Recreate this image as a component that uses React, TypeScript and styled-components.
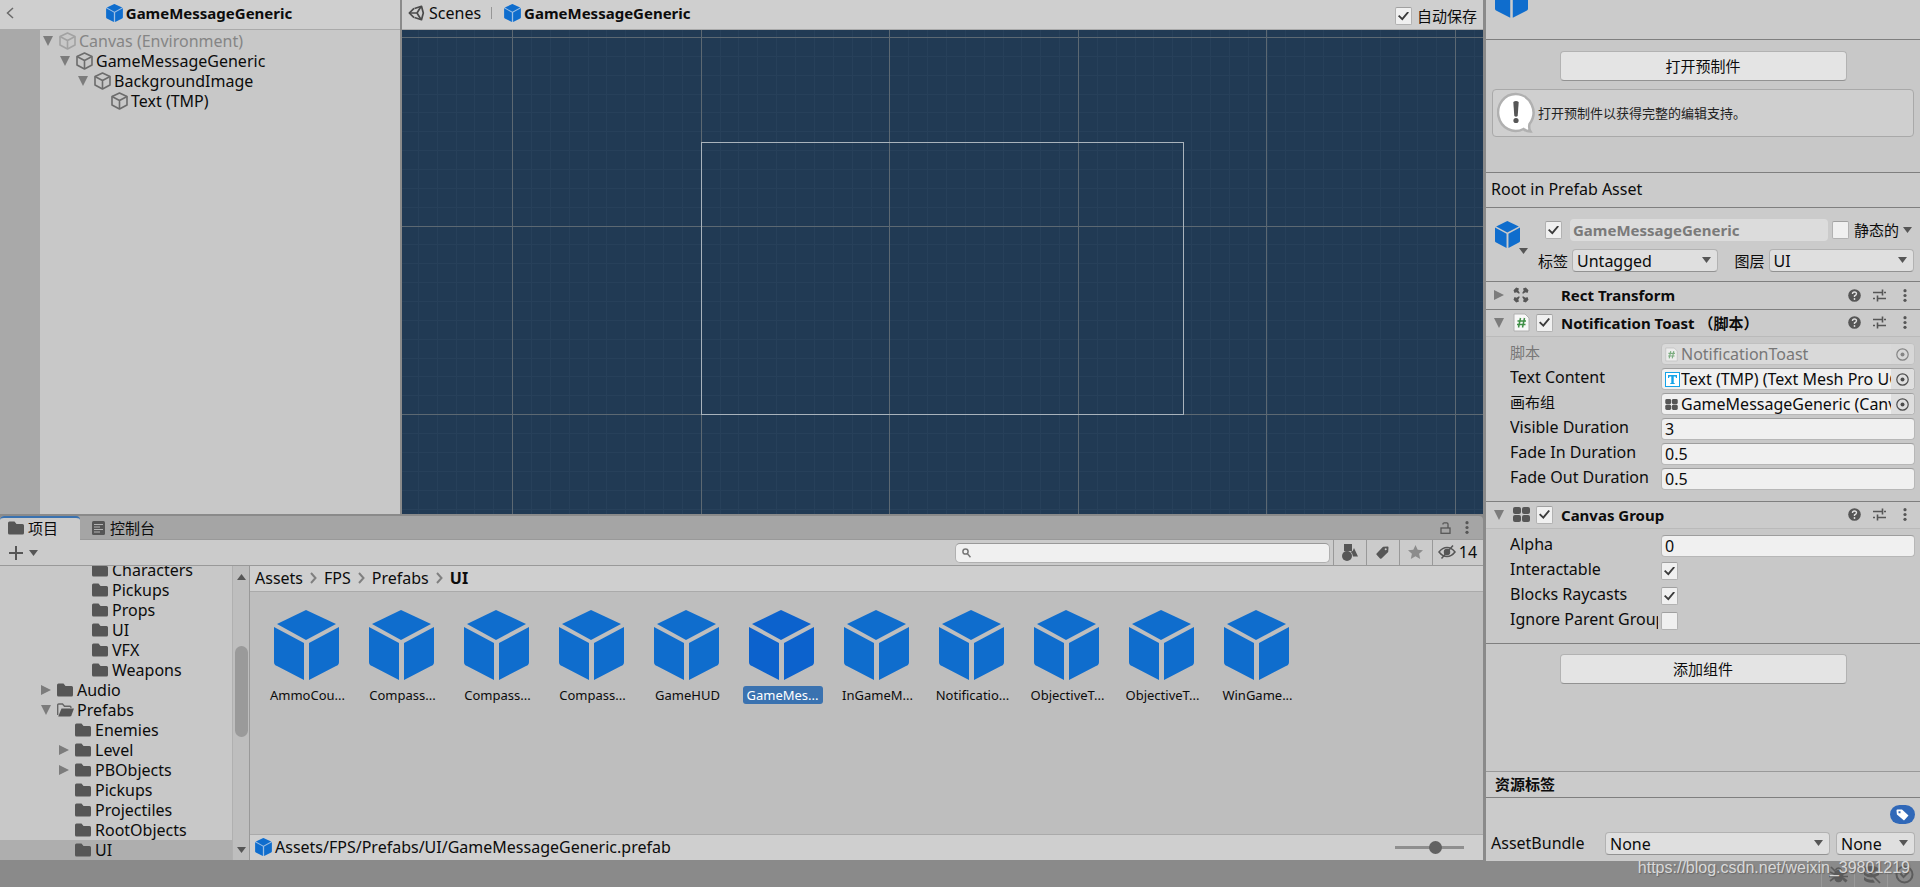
import React from 'react';
import styled, { createGlobalStyle, css } from 'styled-components';

const GlobalStyle = createGlobalStyle`
  *, *::before, *::after { box-sizing: border-box; }
  body {
    margin: 0;
    background: #8a8a8a;
    color: #0c0c0c;
    font: 16px/20px "Noto Sans", "Noto Sans CJK SC", sans-serif;
  }
  button, input, select { font: inherit; color: inherit; }
  button { background: none; border: 0; padding: 0; cursor: pointer; }
  ul { list-style: none; margin: 0; padding: 0; }
  h2, h3 { margin: 0; font-size: 15px; line-height: 20px; }
  :lang(zh) { font-size: 15px; }
  svg { display: block; flex: none; }
`;

/* ---------- Layout ---------- */

const Page = styled.div`
  display: flex;
  flex-direction: column;
  min-height: 100vh;
`;
const Workspace = styled.div`
  flex: 1;
  display: flex;
  gap: 3px;
`;
const MainColumn = styled.div`
  flex: 1;
  min-width: 0;
  display: flex;
  flex-direction: column;
  gap: 2px;
  padding-bottom: 1px;
`;
const TopPanels = styled.div`
  flex: 1;
  display: flex;
  gap: 2px;
`;
const Panel = styled.section`
  display: flex;
  flex-direction: column;
  background: #c8c8c8;
  min-width: 0;
`;
const HierarchyPanel = styled(Panel)`
  width: 400px;
`;
const ScenePanel = styled(Panel)`
  flex: 1;
`;
const PanelBar = styled.header`
  display: flex;
  align-items: center;
  height: 30px;
  background: #cfcfcf;
  border-bottom: 1px solid #aaa;
  padding: 0 6px 3px;
`;
const Title = styled.h2`
  display: flex;
  align-items: center;
  gap: 3px;
  font-weight: 700;
`;
const CenterTitle = styled(Title)`
  flex: 1;
  justify-content: center;
  padding-right: 10px;
`;

/* ---------- Hierarchy ---------- */

const HierarchyBody = styled.div`
  flex: 1;
  display: flex;
`;
const Gutter = styled.div`
  width: 40px;
  background: #a9a9a9;
`;
const Tree = styled.ul`
  flex: 1;
  padding-top: 1px;
`;
const TreeRow = styled.li<{ $indent: number; $dim?: boolean; $selected?: boolean }>`
  display: flex;
  align-items: center;
  height: 20px;
  white-space: nowrap;
  padding-left: ${p => p.$indent}px;
  color: ${p => (p.$dim ? '#858585' : 'inherit')};
  background: ${p => (p.$selected ? '#aeaeae' : 'transparent')};
`;
const Toggle = styled.button`
  width: 10px;
  height: 20px;
  margin-right: 6px;
  display: flex;
  align-items: center;
`;
const TreeIcon = styled.span`
  width: 20px;
`;

/* ---------- Scene ---------- */

const Crumb = styled.a`
  display: flex;
  align-items: center;
  gap: 4px;
  color: inherit;
  text-decoration: none;
`;
const BarDivider = styled.span`
  width: 1px;
  height: 12px;
  margin: 0 12px 0 10px;
  background: #969696;
`;
const AutoSave = styled.label`
  display: flex;
  align-items: center;
  gap: 5px;
  margin-left: auto;
  padding-top: 6px;
`;
const SceneCanvas = styled.svg`
  flex: 1;
  width: 100%;
  min-height: 200px;
  background: #213a54;
`;

/* ---------- Form controls ---------- */

const Check = styled.input.attrs({ type: 'checkbox' })`
  appearance: none;
  flex: none;
  display: grid;
  place-items: center;
  width: 17px;
  height: 18px;
  margin: 0;
  background: #f0f0f0;
  border: 1px solid #b2b2b2;
  border-top-color: #a0a0a0;
  border-radius: 2px;
  &:checked::before {
    content: '';
    width: 11px;
    height: 9px;
    background: #3c3c3c;
    clip-path: polygon(0 52%, 12% 38%, 38% 70%, 86% 0, 100% 10%, 40% 100%);
  }
`;
const fieldBox = css`
  height: 22px;
  background: #f0f0f0;
  border: 1px solid #b7b7b7;
  border-top-color: #9e9e9e;
  border-radius: 4px;
`;
const TextField = styled.input.attrs({ type: 'text' })`
  ${fieldBox}
  min-width: 0;
  width: 100%;
  padding: 0 3px;
`;
const ObjectBox = styled.div<{ $dim?: boolean }>`
  ${fieldBox}
  display: flex;
  align-items: center;
  min-width: 0;
  overflow: hidden;
  padding-left: 3px;
  ${p => p.$dim && css`background: #d9d9d9; border-color: #c0c0c0; color: #777;`}
`;
const ObjectName = styled.input.attrs({ type: 'text', readOnly: true })`
  flex: 1;
  min-width: 0;
  height: 20px;
  border: 0;
  padding: 0;
  background: transparent;
  text-overflow: clip;
`;
const ObjectIcon = styled.span`
  width: 16px;
  flex: none;
`;
const Picker = styled.button<{ $dim?: boolean }>`
  width: 23px;
  height: 20px;
  display: grid;
  place-items: center;
  background: ${p => (p.$dim ? '#d6d6d6' : '#dedede')};
  opacity: ${p => (p.$dim ? 0.6 : 1)};
`;
const SelectWrap = styled.span<{ $width?: number }>`
  position: relative;
  display: block;
  ${p => (p.$width ? css`width: ${p.$width}px;` : css`flex: 1;`)}
  & > svg { position: absolute; right: 7px; top: 8px; pointer-events: none; }
`;
const SelectBox = styled.select`
  appearance: none;
  display: block;
  width: 100%;
  height: 23px;
  padding: 0 18px 0 4px;
  background: #dfdfdf;
  border: 1px solid #b2b2b2;
  border-bottom-color: #929292;
  border-radius: 4px;
`;
const WideButton = styled.button`
  display: block;
  width: 287px;
  height: 30px;
  margin: 0 auto;
  padding-bottom: 1px;
  background: #e4e4e4;
  border: 1px solid #b2b2b2;
  border-bottom-color: #929292;
  border-radius: 4px;
`;

/* ---------- Project ---------- */

const ProjectPanel = styled(Panel)`
  height: 344px;
  background: #a5a5a5;
  border-radius: 4px 4px 0 0;
  overflow: hidden;
`;
const TabBar = styled.div`
  display: flex;
  height: 24px;
  border-bottom: 1px solid #999;
`;
const Tab = styled.button<{ $active?: boolean }>`
  display: flex;
  align-items: center;
  gap: 5px;
  height: 24px;
  padding: 0 8px;
  ${p => p.$active && css`
    gap: 4px;
    width: 80px;
    margin-right: 4px;
    background: #cbcbcb;
    border-top: 2px solid #3a72b0;
    border-radius: 4px 4px 0 0;
    padding-bottom: 2px;
  `}
`;
const TabActions = styled.div`
  display: flex;
  align-items: center;
  gap: 14px;
  margin-left: auto;
  padding-right: 14px;
`;
const ToolBar = styled.div`
  display: flex;
  align-items: center;
  height: 26px;
  background: #cbcbcb;
  border-bottom: 1px solid #999;
`;
const AddButton = styled.button`
  display: flex;
  align-items: center;
  gap: 5px;
  padding-left: 8px;
`;
const Search = styled.label`
  display: flex;
  align-items: center;
  gap: 4px;
  width: 375px;
  height: 20px;
  margin: 0 3px 0 auto;
  padding: 0 6px;
  background: #f0f0f0;
  border: 1px solid #b0b0b0;
  border-top-color: #999;
  border-radius: 5px;
`;
const SearchInput = styled.input.attrs({ type: 'search' })`
  flex: 1;
  min-width: 0;
  border: 0;
  padding: 0;
  height: 16px;
  background: transparent;
  outline: 0;
`;
const ToolButton = styled.button<{ $wide?: boolean }>`
  display: flex;
  align-items: center;
  justify-content: center;
  gap: 3px;
  width: ${p => (p.$wide ? 51 : 33)}px;
  height: 25px;
  padding: 0 1px 1px 0;
  border-left: 1px solid #999;
`;
const ProjectBody = styled.div`
  flex: 1;
  min-height: 0;
  display: flex;
`;
const FolderPane = styled.div`
  width: 232px;
  background: #c8c8c8;
  display: flex;
  flex-direction: column;
  justify-content: flex-end;
  overflow: hidden;
`;
const ScrollTrack = styled.div`
  display: flex;
  flex-direction: column;
  align-items: center;
  width: 18px;
  padding: 8px 0 7px;
  background: #bebebe;
  border-left: 1px solid #b0b0b0;
  border-right: 1px solid #999;
`;
const ScrollRail = styled.div`
  flex: 1;
  width: 13px;
  padding-top: 66px;
`;
const ScrollThumb = styled.div`
  height: 91px;
  border-radius: 7px;
  background: #9a9a9a;
`;
const AssetPane = styled.div`
  flex: 1;
  min-width: 0;
  display: flex;
  flex-direction: column;
  background: #bebebe;
`;
const Breadcrumbs = styled.nav`
  display: flex;
  align-items: center;
  gap: 7px;
  height: 26px;
  padding: 0 5px 2px;
  background: #cfcfcf;
  border-bottom: 1px solid #aaa;
`;
const AssetGrid = styled.ul`
  flex: 1;
  display: flex;
  flex-wrap: wrap;
  align-content: flex-start;
  padding: 18px 9px 0;
`;
const Asset = styled.li`
  width: 95px;
  display: flex;
  flex-direction: column;
  align-items: center;
  gap: 6px;
`;
const AssetName = styled.span<{ $selected?: boolean }>`
  width: 80px;
  height: 18px;
  margin-left: 2px;
  font-size: 13px;
  line-height: 18px;
  text-align: center;
  white-space: nowrap;
  border-radius: 3px;
  background: ${p => (p.$selected ? '#3a72b0' : 'transparent')};
  color: ${p => (p.$selected ? '#fff' : 'inherit')};
`;
const PathBar = styled.footer`
  display: flex;
  align-items: center;
  gap: 3px;
  height: 26px;
  padding: 0 19px 1px 5px;
  background: #cfcfcf;
  border-top: 1px solid #aaa;
`;
const Zoom = styled.input.attrs({ type: 'range' })`
  appearance: none;
  width: 69px;
  height: 13px;
  margin: 0 0 0 auto;
  background: linear-gradient(#8f8f8f, #8f8f8f) center / 100% 3px no-repeat;
  &::-webkit-slider-thumb {
    appearance: none;
    width: 13px;
    height: 13px;
    border-radius: 50%;
    background: #626262;
  }
`;

/* ---------- Inspector ---------- */

const Inspector = styled.aside`
  width: 434px;
  display: flex;
  flex-direction: column;
  background: #c8c8c8;
`;
const AssetHeader = styled.div`
  height: 40px;
  padding-left: 9px;
  overflow: hidden;
  background: #cbcbcb;
  border-bottom: 1px solid #7f7f7f;
  & > svg { margin-top: -18px; }
`;
const OpenArea = styled.div`
  display: flex;
  flex-direction: column;
  gap: 8px;
  height: 133px;
  padding: 11px 6px 0;
  border-bottom: 1px solid #7f7f7f;
`;
const HelpBox = styled.div`
  display: flex;
  align-items: center;
  gap: 2px;
  height: 48px;
  padding-left: 4px;
  color: #222;
  background: #cfcfcf;
  border: 1px solid #a9a9a9;
  border-radius: 4px;
  & > p { margin: 0; font-size: 13px; }
`;
const RootNote = styled.div`
  height: 35px;
  padding: 6px 5px;
  background: #cbcbcb;
  border-bottom: 1px solid #7f7f7f;
`;
const ObjectHeader = styled.div`
  display: flex;
  height: 74px;
  padding: 11px 6px 0 9px;
  background: #cbcbcb;
  border-bottom: 1px solid #7f7f7f;
`;
const ObjectPreview = styled.button`
  display: flex;
  flex-direction: column;
  align-items: flex-end;
  width: 33px;
  height: 32px;
  padding-top: 2px;
  & > svg:first-child { align-self: flex-start; }
`;
const HeaderLines = styled.div`
  flex: 1;
  min-width: 0;
  display: flex;
  flex-direction: column;
  gap: 8px;
`;
const NameLine = styled.div`
  display: flex;
  align-items: center;
  height: 22px;
  gap: 4px;
  padding: 0 2px 0 17px;
`;
const NameInput = styled.input.attrs({ type: 'text' })`
  flex: 1;
  min-width: 0;
  height: 22px;
  margin-left: 4px;
  padding: 0 3px;
  font-size: 15px;
  font-weight: 700;
  color: #7a7a7a;
  background: #dcdcdc;
  border: 0;
  border-radius: 4px;
`;
const StaticLabel = styled.label`
  padding-left: 1px;
`;
const TagLine = styled.div`
  display: flex;
  align-items: center;
  gap: 4px;
  padding-left: 10px;
  & > label:nth-of-type(2) { margin-left: 13px; }
`;
const ComponentBar = styled.header<{ $open?: boolean }>`
  display: flex;
  align-items: center;
  height: ${p => (p.$open ? 27 : 28)}px;
  padding: 0 3px 1px 8px;
  background: #cbcbcb;
  border-bottom: 1px solid ${p => (p.$open ? '#bababa' : '#7f7f7f')};
`;
const BarSlot = styled.span<{ $width: number }>`
  width: ${p => p.$width}px;
  display: flex;
  align-items: center;
`;
const ComponentName = styled.h3`
  flex: 1;
`;
const BarActions = styled.div`
  display: flex;
  & > button {
    width: 25px;
    display: grid;
    place-items: center;
  }
`;
const Fields = styled.div`
  display: flex;
  flex-direction: column;
  gap: 3px;
  padding: 6px 5px 11px 24px;
  border-bottom: 1px solid #7f7f7f;
`;
const FieldRow = styled.div<{ $dim?: boolean }>`
  display: grid;
  grid-template-columns: 148px 1fr;
  column-gap: 3px;
  height: 22px;
  & > label {
    overflow-x: clip;
    overflow-y: visible;
    white-space: nowrap;
    line-height: 18px;
    color: ${p => (p.$dim ? '#777' : 'inherit')};
  }
  & > input[type='checkbox'] { align-self: center; }
`;
const AddArea = styled.div`
  flex: 1;
  padding-top: 10px;
`;
const LabelsBar = styled.header`
  height: 27px;
  padding: 2px 9px;
  background: #cbcbcb;
  border-top: 1px solid #999;
  border-bottom: 1px solid #7f7f7f;
`;
const LabelsBody = styled.div`
  display: flex;
  flex-direction: column;
  gap: 8px;
  height: 63px;
  padding: 7px 5px 0;
  background: #cbcbcb;
`;
const TagPill = styled.button`
  display: grid;
  place-items: center;
  align-self: flex-end;
  width: 25px;
  height: 19px;
  border-radius: 10px;
  background: #3068b8;
`;
const BundleLine = styled.div`
  display: flex;
  align-items: center;
  gap: 6px;
  & > label { width: 108px; padding-bottom: 2px; }
`;

/* ---------- Status bar ---------- */

const StatusBar = styled.footer`
  position: relative;
  display: flex;
  justify-content: flex-end;
  height: 26px;
  background: #8a8a8a;
`;
const StatusButton = styled.button`
  display: grid;
  place-items: center;
  width: 33px;
  border-left: 1px solid #9a9a9a;
  color: #5c5c5c;
`;
const Watermark = styled.span`
  position: absolute;
  right: 10px;
  top: -3px;
  font: 16px/20px "Liberation Sans", Arial, sans-serif;
  color: rgba(235, 235, 235, 0.85);
  text-shadow: 1px 1px 1px rgba(80, 80, 80, 0.6);
`;

/* ---------- Icons ---------- */

const Cube = ({ w, h, fill = '#0f6dcd', back }: { w: number; h: number; fill?: string; back?: boolean }) => (
  <svg width={w} height={h} viewBox="0 0 65 70">
    {back && <path d="M32 0 65 15V54L32 70 0 54V15Z" fill="#9dbfe3" />}
    <path d="M32 0 62 14 32 30 3 14Z" fill={fill} />
    <path d="M0 17 30 33V70L3 56Q0 55 0 52Z" fill={fill} />
    <path d="M65 17 35 33V70L62 56Q65 55 65 52Z" fill={fill} />
  </svg>
);
const WireCube = ({ dim }: { dim?: boolean }) => (
  <svg width="17" height="18" viewBox="0 0 17 18" fill="none" stroke={dim ? '#a2a2a2' : '#6c6c6c'} strokeWidth="1.6" strokeLinejoin="round">
    <path d="M8.5 1 16 4.5V13L8.5 17 1 13V4.500Z" />
    <path d="M1 4.500 8.500 8.500 16 4.500M8.500 8.500V17" />
  </svg>
);
const ArrowDown = ({ fill = '#565656' }: { fill?: string }) => (
  <svg width="9" height="6" viewBox="0 0 9 6"><path d="M0 0H9L4.500 6Z" fill={fill} /></svg>
);
const ArrowUp = () => (
  <svg width="9" height="6" viewBox="0 0 9 6"><path d="M0 6H9L4.500 0Z" fill="#565656" /></svg>
);
const Fold = ({ open }: { open: boolean }) => (
  <svg width="10" height="10" viewBox="0 0 10 10">
    <path d={open ? 'M0 0H10L5 10Z' : 'M0 0 10 5 0 10Z'} fill="#7c7c7c" />
  </svg>
);
const Folder = () => (
  <svg width="16" height="14" viewBox="0 0 16 14">
    <path d="M0 2Q0 .5 1.500 .5H6.500L8.500 3H14.500Q16 3 16 4.500V12Q16 13.500 14.500 13.500H1.500Q0 13.500 0 12Z" fill="#565656" />
  </svg>
);
const FolderOpen = () => (
  <svg width="17" height="14" viewBox="0 0 17 14">
    <path d="M.7 12V2Q.7 1 1.700 1H5.500L7.500 3.300H13Q14 3.300 14 5" fill="none" stroke="#666" strokeWidth="1.400" />
    <path d="M4.500 5.500H17L14.500 12.200Q14 13.500 12.500 13.500H1.200Z" fill="#565656" />
  </svg>
);
const BackArrow = () => (
  <svg width="8" height="12" viewBox="0 0 8 12" fill="none" stroke="#6a6a6a" strokeWidth="1.500"><path d="M7 1 1.500 6 7 11" /></svg>
);
const Chevron = () => (
  <svg width="7" height="12" viewBox="0 0 7 12" fill="none" stroke="#808080" strokeWidth="2"><path d="M1 1 5.500 6 1 11" /></svg>
);
const UnityLogo = () => (
  <svg width="17" height="16" viewBox="0 0 17 16" fill="none" stroke="#4a4a4a" strokeWidth="1.700" strokeLinejoin="round">
    <path d="M6.500 3.500 13.500 1.300 15.300 8 13.500 14.700 6.500 12.500" />
    <path d="M6 3.300 1.300 8 6 12.700" />
    <path d="M1.500 8H9L12.700 2M9 8 12.700 14" />
  </svg>
);
const Console = () => (
  <svg width="13" height="14" viewBox="0 0 13 14">
    <rect width="13" height="14" rx="1.500" fill="#565656" />
    <path d="M2 3.500H11M2 6H8M2 8.500H11M2 11H8" stroke="#b4b4b4" />
  </svg>
);
const Plus = () => (
  <svg width="16" height="16" viewBox="0 0 16 16" stroke="#565656" strokeWidth="2"><path d="M8 1V15M1 8H15" /></svg>
);
const Lock = () => (
  <svg width="11" height="12" viewBox="0 0 11 12" fill="none" stroke="#565656" strokeWidth="1.300">
    <rect x="1" y="6" width="9" height="5.300" /><path d="M3 2.500V2Q3 .8 4.200 .8H6.800Q8 .8 8 2V6" />
  </svg>
);
const Dots = () => (
  <svg width="4" height="13" viewBox="0 0 4 13" fill="#565656">
    <circle cx="2" cy="1.700" r="1.600" /><circle cx="2" cy="6.500" r="1.600" /><circle cx="2" cy="11.300" r="1.600" />
  </svg>
);
const Magnifier = () => (
  <svg width="9" height="10" viewBox="0 0 9 10" fill="none" stroke="#777" strokeWidth="1.500">
    <circle cx="3.500" cy="3.500" r="2.600" /><path d="M5.300 5.500 8.500 9.200" />
  </svg>
);
const Shapes = () => (
  <svg width="16" height="17" viewBox="0 0 16 17" fill="#565656">
    <rect x="2" width="8" height="7" /><circle cx="5" cy="12" r="5" /><path d="M12 4 16 12.500H11Q10.500 9 8.500 7.700L10.700 7Z" />
  </svg>
);
const Tag = () => (
  <svg width="13" height="13" viewBox="0 0 13 13">
    <path fillRule="evenodd" d="M7 .8 11.500 .5Q12.600 .4 12.500 1.500L12.200 6 5.500 12.600Q4.800 13 4 12.400L.6 8.800Q0 8 .6 7.400ZM9.700 2.300A1 1 0 1 0 9.700 4.300 1 1 0 1 0 9.700 2.300Z" fill="#565656" />
  </svg>
);
const Star = () => (
  <svg width="15" height="14" viewBox="0 0 15 14">
    <path d="M7.500 0 9.700 4.700 15 5.300 11.100 8.800 12.200 14 7.500 11.300 2.800 14 3.900 8.800 0 5.300 5.300 4.700Z" fill="#8c8c8c" />
  </svg>
);
const EyeOff = () => (
  <svg width="18" height="14" viewBox="0 0 18 14" fill="none" stroke="#565656" strokeWidth="1.500">
    <path d="M1 7Q4.500 2.500 9 2.500T17 7Q13.500 11.500 9 11.500T1 7Z" /><circle cx="9" cy="7" r="2.500" fill="#565656" /><path d="M15 .5 3.500 13.500" />
  </svg>
);
const Info = () => (
  <svg width="39" height="42" viewBox="0 0 39 42">
    <path d="M19 2A17.500 18.500 0 1 0 26.500 37Q29 39.500 33.500 39.500 31.500 36.500 32.500 32A18 18.500 0 0 0 19 2Z" fill="#fff" stroke="#b0b0b0" strokeWidth="2.500" />
    <path d="M16.300 10Q19 8 21.700 10L20.700 24Q19 25.500 17.300 24Z" fill="#565656" /><circle cx="19" cy="28.500" r="2.600" fill="#565656" />
  </svg>
);
const RectIcon = () => (
  <svg width="16" height="16" viewBox="0 0 16 16" fill="#565656">
    {[0, 90, 180, 270].map(a => (
      <path key={a} transform={`rotate(${a} 8 8)`} d="M.5 3.200 3.200 .5 6 1.500 5.300 3.500 6.800 6 6 6.800 3.500 5.300 1.500 6Z" />
    ))}
  </svg>
);
const ScriptIcon = ({ small }: { small?: boolean }) => (
  <svg width={small ? 13 : 17} height={small ? 15 : 19} viewBox="0 0 17 19" opacity={small ? 0.6 : 1}>
    <path d="M1 1H12L16 5V18H1Z" fill="#f8f8f8" stroke="#b0b0b0" />
    <path d="M7.500 5 5.500 14.500M11.500 5 9.500 14.500M4.500 8H13M4 11.500H12.500" stroke="#3f8f46" strokeWidth="1.500" />
  </svg>
);
const GroupIcon = ({ w, h }: { w: number; h: number }) => (
  <svg width={w} height={h} viewBox="0 0 17 15" fill="#565656">
    <rect width="8" height="7" rx="2" /><rect x="9" width="8" height="7" rx="2" />
    <rect y="8" width="8" height="7" rx="2" /><rect x="9" y="8" width="8" height="7" rx="2" />
  </svg>
);
const TmpIcon = () => (
  <svg width="15" height="15" viewBox="0 0 15 15">
    <rect x=".5" y=".5" width="14" height="14" fill="#fff" stroke="#14a3e8" />
    <path d="M3 3H12V6H11L10.500 4.500H8.700V11L10 11.500V12H5V11.500L6.300 11V4.500H4.500L4 6H3Z" fill="#14a3e8" />
  </svg>
);
const Target = () => (
  <svg width="13" height="13" viewBox="0 0 13 13"><circle cx="6.500" cy="6.500" r="5.700" fill="none" stroke="#4c4c4c" strokeWidth="1.200" /><circle cx="6.500" cy="6.500" r="2" fill="#4c4c4c" /></svg>
);
const Help = () => (
  <svg width="13" height="13" viewBox="0 0 13 13">
    <circle cx="6.500" cy="6.500" r="6.300" fill="#565656" />
    <path d="M4.500 5Q4.500 3 6.500 3T8.500 4.800Q8.500 6 6.500 7V8" fill="none" stroke="#e0e0e0" strokeWidth="1.400" /><circle cx="6.500" cy="10" r=".9" fill="#e0e0e0" />
  </svg>
);
const Preset = () => (
  <svg width="13" height="13" viewBox="0 0 13 13" fill="none" stroke="#565656" strokeWidth="1.600">
    <path d="M0 3.500H9M11 3.500H13M9.500 .5V6.500M0 9.500H2M4 9.500H13M4.500 6.500V12.500" />
  </svg>
);
const PillTag = () => (
  <svg width="13" height="12" viewBox="0 0 13 12">
    <path fillRule="evenodd" d="M.5 1.500Q.5 .5 1.500 .5H6L12.500 6.500 8 11.500 .9 5.500ZM2.500 2.300V4.300H4.500V2.300Z" fill="#fff" />
  </svg>
);
const BugOff = () => (
  <svg width="19" height="19" viewBox="0 0 19 19" fill="none" stroke="currentColor" strokeWidth="1.700">
    <ellipse cx="9.500" cy="11" rx="4" ry="5.500" fill="currentColor" /><path d="M6.500 5Q9.500 1 12.500 5M1 7 5 9M1 16 5 13M0 11.500H5M18 7 14 9M18 16 14 13M19 11.500H14M2 2 17 17" />
  </svg>
);
const CacheOff = () => (
  <svg width="19" height="19" viewBox="0 0 19 19" fill="currentColor">
    <ellipse cx="9.500" cy="4" rx="7" ry="3" /><path d="M2 7Q9 12 17 7V10Q9 15 2 10ZM2 12Q6 15.500 11 14.500L13 17.500Q5 18.500 2 15Z" />
    <path d="M2 2 18 18" stroke="currentColor" strokeWidth="1.700" />
  </svg>
);
const Progress = () => (
  <svg width="19" height="19" viewBox="0 0 19 19" fill="none" stroke="currentColor" strokeWidth="2"><circle cx="9.500" cy="9.500" r="8" /><path d="M5.500 8.500 8.500 12 13.500 7" /></svg>
);

/* ---------- Parts ---------- */

const hierarchy = [
  { name: 'Canvas (Environment)', indent: 3, fold: true, dim: true },
  { name: 'GameMessageGeneric', indent: 20, fold: true },
  { name: 'BackgroundImage', indent: 38, fold: true },
  { name: 'Text (TMP)', indent: 71 },
];

const folders = [
  { name: 'Characters', indent: 92 },
  { name: 'Pickups', indent: 92 },
  { name: 'Props', indent: 92 },
  { name: 'UI', indent: 92 },
  { name: 'VFX', indent: 92 },
  { name: 'Weapons', indent: 92 },
  { name: 'Audio', indent: 41, fold: 'closed' },
  { name: 'Prefabs', indent: 41, fold: 'open' },
  { name: 'Enemies', indent: 75 },
  { name: 'Level', indent: 59, fold: 'closed' },
  { name: 'PBObjects', indent: 59, fold: 'closed' },
  { name: 'Pickups', indent: 75 },
  { name: 'Projectiles', indent: 75 },
  { name: 'RootObjects', indent: 75 },
  { name: 'UI', indent: 75, selected: true },
];

const assets = [
  'AmmoCou...', 'Compass...', 'Compass...', 'Compass...', 'GameHUD', 'GameMes...',
  'InGameM...', 'Notificatio...', 'ObjectiveT...', 'ObjectiveT...', 'WinGame...',
];

const gridStep = 188.6;
const steps = (count: number, origin: number, step: number) =>
  Array.from({ length: count }, (_, i) => Math.round(origin + i * step));

const Scene = () => (
  <SceneCanvas role="img" aria-label="Scene">
    <g fill="#27405a">
      {steps(140, -3, gridStep / 10).map(x => <rect key={`x${x}`} x={x} width="1" height="100%" />)}
      {steps(80, 7, gridStep / 10).map(y => <rect key={`y${y}`} y={y} width="100%" height="1" />)}
    </g>
    <g fill="#5c6872">
      {steps(14, 110, gridStep).map(x => <rect key={`x${x}`} x={x} width="1" height="100%" />)}
      {steps(8, 7, gridStep).map(y => <rect key={`y${y}`} y={y} width="100%" height="1" />)}
    </g>
    <rect x="299.500" y="112.500" width="482" height="272" fill="none" stroke="#a9b3bc" />
  </SceneCanvas>
);

const Dropdown = ({ id, value, width, label }: { id: string; value: string; width?: number; label?: string }) => (
  <SelectWrap $width={width}>
    <SelectBox id={id} aria-label={label} defaultValue={value}><option>{value}</option></SelectBox>
    <ArrowDown />
  </SelectWrap>
);

const Actions = () => (
  <BarActions>
    <button aria-label="帮助"><Help /></button>
    <button aria-label="预设"><Preset /></button>
    <button aria-label="菜单"><Dots /></button>
  </BarActions>
);

const ValueRow = ({ id, label, value }: { id: string; label: string; value: string }) => (
  <FieldRow>
    <label htmlFor={id}>{label}</label>
    <TextField id={id} defaultValue={value} />
  </FieldRow>
);

const ObjectRow = ({ id, label, value, icon, dim, lang }: { id: string; label: string; value: string; icon: React.ReactNode; dim?: boolean; lang?: string }) => (
  <FieldRow $dim={dim}>
    <label htmlFor={id} lang={lang}>{label}</label>
    <ObjectBox $dim={dim}>
      <ObjectIcon>{icon}</ObjectIcon>
      <ObjectName id={id} defaultValue={value} />
      <Picker $dim={dim} aria-label={label}><Target /></Picker>
    </ObjectBox>
  </FieldRow>
);

const CheckRow = ({ id, label, checked }: { id: string; label: string; checked?: boolean }) => (
  <FieldRow>
    <label htmlFor={id}>{label}</label>
    <Check id={id} defaultChecked={checked} />
  </FieldRow>
);

export default function App() {
  return (
    <Page>
      <GlobalStyle />
      <Workspace>
        <MainColumn>
          <TopPanels>
            <HierarchyPanel>
              <PanelBar>
                <button aria-label="返回"><BackArrow /></button>
                <CenterTitle><Cube w={17} h={18} back />GameMessageGeneric</CenterTitle>
              </PanelBar>
              <HierarchyBody>
                <Gutter />
                <Tree>
                  {hierarchy.map(r => (
                    <TreeRow key={r.name} $indent={r.indent} $dim={r.dim}>
                      {r.fold && <Toggle aria-label={r.name}><Fold open /></Toggle>}
                      <TreeIcon><WireCube dim={r.dim} /></TreeIcon>
                      {r.name}
                    </TreeRow>
                  ))}
                </Tree>
              </HierarchyBody>
            </HierarchyPanel>
            <ScenePanel>
              <PanelBar>
                <Crumb href="#scenes"><UnityLogo />Scenes</Crumb>
                <BarDivider />
                <Title><Cube w={17} h={18} back />GameMessageGeneric</Title>
                <AutoSave lang="zh"><Check defaultChecked />自动保存</AutoSave>
              </PanelBar>
              <Scene />
            </ScenePanel>
          </TopPanels>

          <ProjectPanel>
            <TabBar>
              <Tab $active lang="zh"><Folder />项目</Tab>
              <Tab lang="zh"><Console />控制台</Tab>
              <TabActions>
                <button aria-label="锁定"><Lock /></button>
                <button aria-label="菜单"><Dots /></button>
              </TabActions>
            </TabBar>
            <ToolBar>
              <AddButton aria-label="添加"><Plus /><ArrowDown /></AddButton>
              <Search><Magnifier /><SearchInput aria-label="搜索" /></Search>
              <ToolButton aria-label="按类型搜索"><Shapes /></ToolButton>
              <ToolButton aria-label="按标签搜索"><Tag /></ToolButton>
              <ToolButton aria-label="收藏"><Star /></ToolButton>
              <ToolButton $wide><EyeOff />14</ToolButton>
            </ToolBar>
            <ProjectBody>
              <FolderPane>
                <ul>
                  {folders.map((f, i) => (
                    <TreeRow key={i} $indent={f.indent} $selected={f.selected}>
                      {f.fold && <Toggle aria-label={f.name}><Fold open={f.fold === 'open'} /></Toggle>}
                      <TreeIcon>{f.fold === 'open' ? <FolderOpen /> : <Folder />}</TreeIcon>
                      {f.name}
                    </TreeRow>
                  ))}
                </ul>
              </FolderPane>
              <ScrollTrack>
                <ArrowUp />
                <ScrollRail><ScrollThumb /></ScrollRail>
                <ArrowDown />
              </ScrollTrack>
              <AssetPane>
                <Breadcrumbs>
                  <Crumb href="#assets">Assets</Crumb><Chevron />
                  <Crumb href="#fps">FPS</Crumb><Chevron />
                  <Crumb href="#prefabs">Prefabs</Crumb><Chevron />
                  <b>UI</b>
                </Breadcrumbs>
                <AssetGrid>
                  {assets.map((name, i) => (
                    <Asset key={i}>
                      <Cube w={65} h={70} fill={i === 5 ? '#0c62cd' : undefined} />
                      <AssetName $selected={i === 5}>{name}</AssetName>
                    </Asset>
                  ))}
                </AssetGrid>
                <PathBar>
                  <Cube w={17} h={18} back />
                  Assets/FPS/Prefabs/UI/GameMessageGeneric.prefab
                  <Zoom aria-label="图标大小" defaultValue={60} />
                </PathBar>
              </AssetPane>
            </ProjectBody>
          </ProjectPanel>
        </MainColumn>

        <Inspector>
          <AssetHeader><Cube w={33} h={36} /></AssetHeader>
          <OpenArea>
            <WideButton lang="zh">打开预制件</WideButton>
            <HelpBox><Info /><p>打开预制件以获得完整的编辑支持。</p></HelpBox>
          </OpenArea>
          <RootNote>Root in Prefab Asset</RootNote>
          <ObjectHeader>
            <ObjectPreview aria-label="图标"><Cube w={25} h={27} /><ArrowDown /></ObjectPreview>
            <HeaderLines>
              <NameLine>
                <Check defaultChecked aria-label="启用" />
                <NameInput defaultValue="GameMessageGeneric" aria-label="名称" />
                <Check id="static" />
                <StaticLabel htmlFor="static" lang="zh">静态的</StaticLabel>
                <button aria-label="静态选项"><ArrowDown /></button>
              </NameLine>
              <TagLine>
                <label htmlFor="tag" lang="zh">标签</label>
                <Dropdown id="tag" value="Untagged" />
                <label htmlFor="layer" lang="zh">图层</label>
                <Dropdown id="layer" value="UI" />
              </TagLine>
            </HeaderLines>
          </ObjectHeader>

          <ComponentBar>
            <BarSlot $width={19}><button aria-label="展开"><Fold open={false} /></button></BarSlot>
            <BarSlot $width={48}><RectIcon /></BarSlot>
            <ComponentName>Rect Transform</ComponentName>
            <Actions />
          </ComponentBar>

          <ComponentBar $open>
            <BarSlot $width={19}><button aria-label="折叠"><Fold open /></button></BarSlot>
            <BarSlot $width={23}><ScriptIcon /></BarSlot>
            <BarSlot $width={25}><Check defaultChecked aria-label="启用脚本" /></BarSlot>
            <ComponentName>Notification Toast （脚本）</ComponentName>
            <Actions />
          </ComponentBar>
          <Fields>
            <ObjectRow id="script" label="脚本" lang="zh" value="NotificationToast" icon={<ScriptIcon small />} dim />
            <ObjectRow id="content" label="Text Content" value="Text (TMP) (Text Mesh Pro UGUI)" icon={<TmpIcon />} />
            <ObjectRow id="group" label="画布组" lang="zh" value="GameMessageGeneric (Canvas Group)" icon={<GroupIcon w={13} h={11} />} />
            <ValueRow id="visible" label="Visible Duration" value="3" />
            <ValueRow id="fadein" label="Fade In Duration" value="0.5" />
            <ValueRow id="fadeout" label="Fade Out Duration" value="0.5" />
          </Fields>

          <ComponentBar $open>
            <BarSlot $width={19}><button aria-label="折叠"><Fold open /></button></BarSlot>
            <BarSlot $width={23}><GroupIcon w={17} h={15} /></BarSlot>
            <BarSlot $width={25}><Check defaultChecked aria-label="启用画布组" /></BarSlot>
            <ComponentName>Canvas Group</ComponentName>
            <Actions />
          </ComponentBar>
          <Fields>
            <ValueRow id="alpha" label="Alpha" value="0" />
            <CheckRow id="interactable" label="Interactable" checked />
            <CheckRow id="blocks" label="Blocks Raycasts" checked />
            <CheckRow id="ignore" label="Ignore Parent Groups" />
          </Fields>
          <AddArea><WideButton lang="zh">添加组件</WideButton></AddArea>

          <LabelsBar><h3>资源标签</h3></LabelsBar>
          <LabelsBody>
            <TagPill aria-label="添加标签"><PillTag /></TagPill>
            <BundleLine>
              <label htmlFor="bundle">AssetBundle</label>
              <Dropdown id="bundle" value="None" />
              <Dropdown id="variant" value="None" label="变体" width={79} />
            </BundleLine>
          </LabelsBody>
        </Inspector>
      </Workspace>
      <StatusBar>
        <StatusButton aria-label="调试"><BugOff /></StatusButton>
        <StatusButton aria-label="缓存"><CacheOff /></StatusButton>
        <StatusButton aria-label="进度"><Progress /></StatusButton>
        <Watermark>https://blog.csdn.net/weixin_39801219</Watermark>
      </StatusBar>
    </Page>
  );
}
